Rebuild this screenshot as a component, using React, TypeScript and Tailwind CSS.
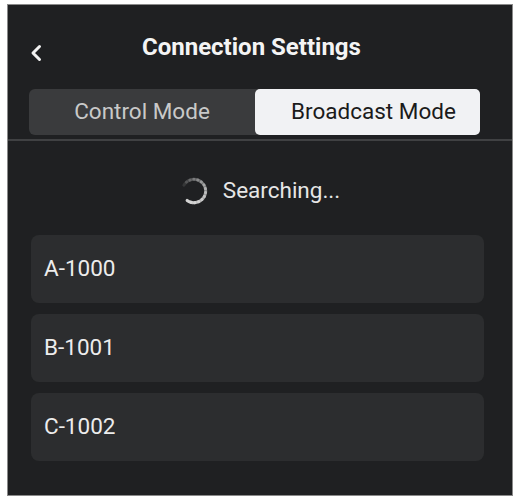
import React from "react";

function Spinner() {
  const cx = 12, cy = 12, r = 10;
  const segs = 14;
  const start = -150;
  const sweep = 275;
  const paths = [];
  for (let i = 0; i < segs; i++) {
    const a0 = ((start + (sweep * i) / segs) * Math.PI) / 180;
    const a1 = ((start + (sweep * (i + 1)) / segs + 1) * Math.PI) / 180;
    const x0 = cx + r * Math.cos(a0), y0 = cy + r * Math.sin(a0);
    const x1 = cx + r * Math.cos(a1), y1 = cy + r * Math.sin(a1);
    paths.push(
      <path
        key={i}
        d={`M${x0.toFixed(2)} ${y0.toFixed(2)} A${r} ${r} 0 0 1 ${x1.toFixed(2)} ${y1.toFixed(2)}`}
        stroke="#d4d4d4"
        strokeOpacity={0.06 + (0.94 * (i + 1)) / segs}
        strokeWidth={2.6}
        fill="none"
        strokeLinecap="round"
      />
    );
  }
  return (
    <svg width="28" height="28" viewBox="0 0 24 24">
      {paths}
    </svg>
  );
}

export default function App() {
  const items = ["A-1000", "B-1001", "C-1002"];
  return (
    <div className="w-[517px] h-[501px] bg-white pt-[4px] pl-[7px]" style={{ fontFamily: "Roboto, 'Noto Sans', sans-serif" }}>
      <div className="w-[506px] h-[492px] border border-[#8a8a8a] bg-[#1f2022] flex flex-col">
        <div className="h-[84px] flex items-center shrink-0">
          <svg className="ml-[22px] mt-[12px]" width="12" height="18" viewBox="0 0 12 18">
            <path d="M9.5 2.5 L3 9 L9.5 15.5" stroke="#f2f2f2" strokeWidth="3" fill="none" strokeLinecap="round" strokeLinejoin="round" />
          </svg>
          <div className="ml-[100px] text-[24px] font-bold text-[#f4f4f4] leading-none">Connection Settings</div>
        </div>
        <div className="ml-[21px] w-[451px] h-[46px] flex rounded-[6px] bg-[#3a3b3d] shrink-0">
          <div className="w-[226px] flex items-center justify-center text-[22.5px] text-[#c9c9c9]">Control Mode</div>
          <div className="flex-1 flex items-center justify-center pl-[12px] rounded-[5px] bg-[#f1f2f4] text-[22.5px] text-[#1b1b1b]">Broadcast Mode</div>
        </div>
        <div className="mt-[4px] h-[2px] bg-[#404143] shrink-0" />
        <div className="h-[94px] pt-[6px] flex items-center justify-center gap-[15px] shrink-0">
          <Spinner />
          <span className="text-[22.5px] text-[#e6e6e6]">Searching...</span>
        </div>
        <div className="flex flex-col gap-[11px] ml-[23px] w-[453px]">
          {items.map((t) => (
            <div key={t} className="h-[68px] rounded-[8px] bg-[#2c2d2f] flex items-center pl-[13px] text-[22.5px] text-[#ececec]">
              {t}
            </div>
          ))}
        </div>
      </div>
    </div>
  );
}
